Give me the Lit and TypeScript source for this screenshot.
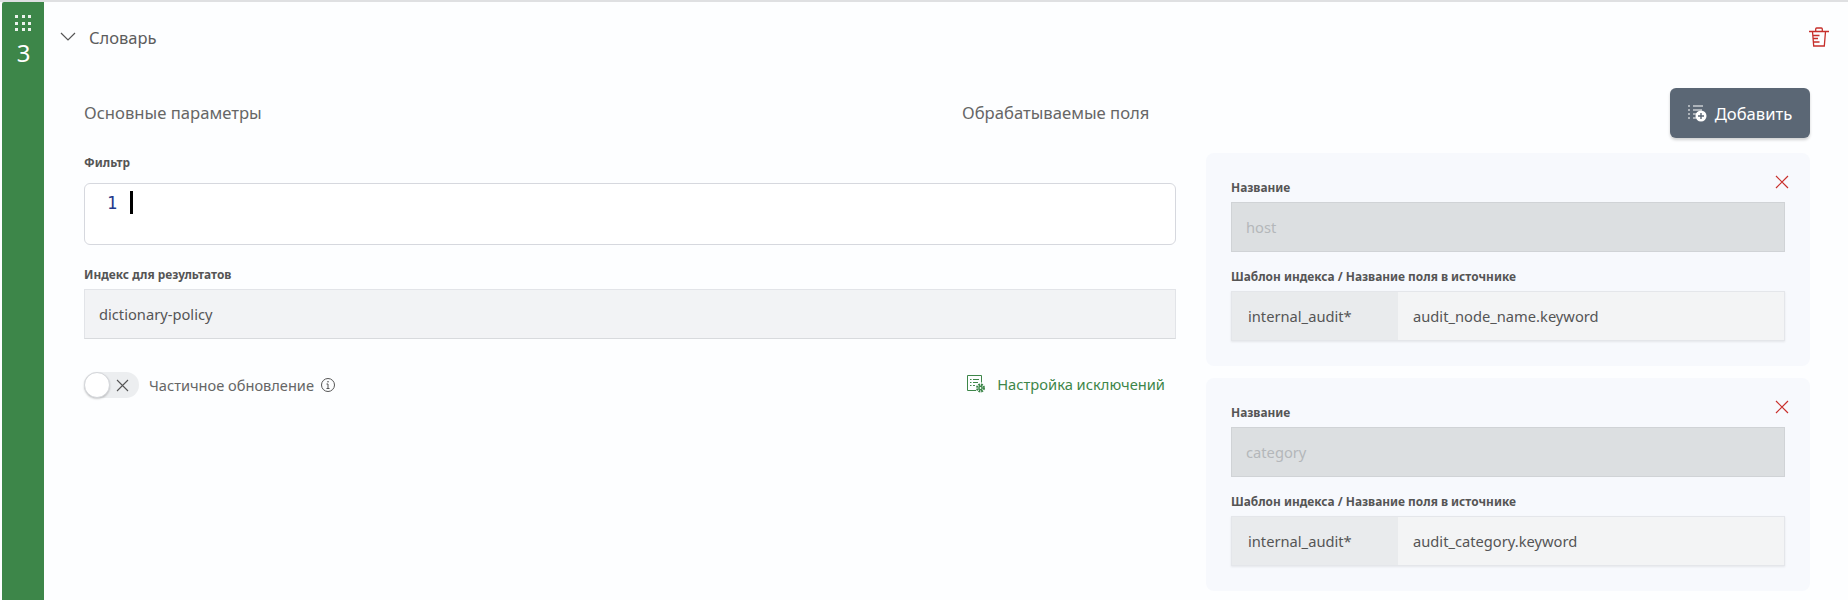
import { LitElement, html, css } from "lit";
import { customElement } from "lit/decorators.js";

const closeIcon = html`<svg class="close" width="14" height="14" viewBox="0 0 14 14" fill="none" stroke="#c9302c" stroke-width="1.2"><path d="M1 1l12 12M13 1L1 13"/></svg>`;

@customElement("app-root")
export class AppRoot extends LitElement {
  static styles = css`
    :host { display: block; width: 1848px; height: 600px; overflow: hidden; background: #fdfeff; font-family: "Noto Sans", sans-serif; color: #555; }
    .panel { height: 598px; border-top: 2px solid #dfe0e2; padding-left: 2px; display: flex; }
    .rail { width: 42px; background: #3d8649; color: #fff; display: flex; flex-direction: column; align-items: center; padding-top: 13px; box-sizing: border-box; border-radius: 2px 0 0 0; flex: none; }
    .dots { display: grid; grid-template-columns: repeat(3, 3px); gap: 3.5px; }
    .dots i { width: 3px; height: 3px; background: rgba(255,255,255,.9); }
    .num { font-size: 24px; line-height: 30px; margin-top: 7px; margin-left: 1px; }
    .main { flex: 1; min-width: 0; }
    .head { display: flex; align-items: center; height: 72px; box-sizing: border-box; padding: 0 19px 2px 16px; }
    .head .title { font-size: 16.5px; margin-left: 13px; color: #5c5c5c; flex: 1; }
    .body { padding: 0 38px 0 40px; }
    .titles { display: grid; grid-template-columns: 878px 1fr auto; align-items: center; margin-top: 14px; }
    .sec { font-size: 16.65px; color: #666; padding-bottom: 2px; }
    .btn { width: 140px; height: 50px; background: #5b6775; color: #fff; border-radius: 6px; display: flex; align-items: center; justify-content: center; gap: 8px; font-size: 16.6px; box-shadow: 0 2px 3px rgba(0,0,0,.18); }
    .cols { display: grid; grid-template-columns: 1092px 604px; column-gap: 30px; margin-top: 15px; }
    label { display: block; font-size: 11.9px; font-weight: 700; color: #555; line-height: 16px; }
    .left label { padding-top: 1px; margin-bottom: -1px; }
    .editor { height: 62px; box-sizing: border-box; border: 1px solid #d6d8de; border-radius: 6px; background: #fff; margin-top: 14px; display: flex; align-items: flex-start; padding: 7px 0 0 22px; }
    .ln { font-family: "DejaVu Sans Mono", monospace; font-size: 17px; line-height: 24px; color: #24388a; }
    .caret { width: 3px; height: 23px; background: #000; margin-left: 13px; }
    .left label.second { margin-top: 20px; }
    .input { height: 50px; box-sizing: border-box; border: 1px solid #e2e4e8; border-bottom-color: #d8dadd; background: #f2f3f5; margin-top: 8px; display: flex; align-items: center; padding-left: 14px; font-size: 14.7px; color: #555; }
    .opts { display: flex; align-items: center; margin-top: 33px; height: 26px; padding-right: 11px; }
    .toggle { width: 55px; height: 26px; border-radius: 13px; background: #eceef0; position: relative; flex: none; }
    .knob { position: absolute; left: 0; top: 0; width: 24px; height: 24px; border-radius: 50%; background: #fff; border: 1px solid #d4d6da; box-shadow: 0 1px 2px rgba(0,0,0,.2); }
    .toggle svg { position: absolute; left: 32px; top: 7px; }
    .opts .txt { font-size: 14.6px; margin-left: 10px; color: #666; padding-bottom: 1px; }
    .opts .info { margin-left: 6px; }
    .link { margin-left: auto; display: flex; align-items: center; gap: 11px; font-size: 14.7px; color: #3d8649; padding-bottom: 2px; }
    .card { background: #f7f9fd; border-radius: 8px; height: 213px; box-sizing: border-box; padding: 26px 25px 0 25px; position: relative; margin-bottom: 12px; }
    .card .close { position: absolute; right: 21px; top: 22px; }
    .card .input { margin-top: 7px; }
    .card .dis { background: #dcdfe1; border-color: #d0d3d6; color: #b4b7ba; }
    .card label.second { margin-top: 16px; }
    .combo { height: 50px; box-sizing: border-box; margin-top: 7px; display: flex; border: 1px solid #e4e6ea; background: #f3f4f5; font-size: 14.7px; color: #555; box-shadow: 0 1px 2px rgba(0,0,0,.08); }
    .combo .addon { width: 166px; background: #e9ebed; display: flex; align-items: center; padding-left: 16px; box-sizing: border-box; }
    .combo .val { display: flex; align-items: center; padding-left: 15px; }
  `;

  card(name: string, src: string) {
    return html`<div class="card">
      ${closeIcon}
      <label>Название</label>
      <div class="input dis">${name}</div>
      <label class="second">Шаблон индекса / Название поля в источнике</label>
      <div class="combo"><div class="addon">internal_audit*</div><div class="val">${src}</div></div>
    </div>`;
  }

  render() {
    return html`<div class="panel">
      <div class="rail">
        <div class="dots">${Array.from({ length: 9 }, () => html`<i></i>`)}</div>
        <div class="num">3</div>
      </div>
      <div class="main">
        <div class="head">
          <svg width="16" height="10" viewBox="0 0 16 10" fill="none" stroke="#555" stroke-width="1.2"><path d="M1 1l7 7 7-7"/></svg>
          <div class="title">Словарь</div>
          <svg width="20" height="20" viewBox="0 0 20 20" fill="none" stroke="#c62f2b" stroke-width="1.3"><path d="M0 4.500h20M6.700 4.500V2q0-1 1-1h4.600q1 0 1 1v2.500M3.500 4.500l1.200 14.500h10.600l1.200-14.500M4 8.500h6.500M4.300 11.500h4.700M4.500 15h6"/></svg>
        </div>
        <div class="body">
          <div class="titles">
            <div class="sec">Основные параметры</div>
            <div class="sec">Обрабатываемые поля</div>
            <div class="btn">
              <svg width="19" height="17" viewBox="0 0 19 17" fill="none"><path stroke="#fff" stroke-width="1.200" d="M5 1h10M0 1h2M0 5h2M5 5h9M0 9h2M5 9h4M0 13h2M5 13h3"/><circle cx="13" cy="11" r="5.500" fill="#fff"/><path stroke="#5b6775" stroke-width="1.400" d="M10 11h6M13 8v6"/></svg>
              <span>Добавить</span>
            </div>
          </div>
          <div class="cols">
            <div class="left">
              <label>Фильтр</label>
              <div class="editor"><span class="ln">1</span><span class="caret"></span></div>
              <label class="second">Индекс для результатов</label>
              <div class="input">dictionary-policy</div>
              <div class="opts">
                <div class="toggle"><div class="knob"></div><svg width="13" height="13" viewBox="0 0 13 13" fill="none" stroke="#555" stroke-width="1.100"><path d="M1 1l11 11M12 1L1 12"/></svg></div>
                <span class="txt">Частичное обновление</span>
                <svg class="info" width="16" height="16" viewBox="0 0 16 16" fill="none" stroke="#555"><circle cx="8" cy="8" r="6.500"/><path d="M8 7v4.500M6.500 11.500h3M6.500 7H8"/><circle cx="8" cy="4.800" r=".8" fill="#555" stroke="none"/></svg>
                <div class="link">
                  <svg width="19" height="18" viewBox="0 0 19 18" fill="none" stroke="#3d8649"><path d="M9 15.500H.5V.5h14v7"/><path d="M3 4.500h1.500M6 4.500h6M3 7.500h1.500M6 7.500h5M3 10.500h1.500M6 10.500h2"/><circle cx="13.500" cy="13" r="3.300" stroke-dasharray="1.800 .8" stroke-width="2.400"/><circle cx="13.500" cy="13" r="2.200" fill="#3d8649" stroke="none"/><circle cx="13.500" cy="13" r=".9" fill="#fff" stroke="none"/></svg>
                  <span>Настройка исключений</span>
                </div>
              </div>
            </div>
            <div class="right">
              ${this.card("host", "audit_node_name.keyword")}
              ${this.card("category", "audit_category.keyword")}
            </div>
          </div>
        </div>
      </div>
    </div>`;
  }
}
